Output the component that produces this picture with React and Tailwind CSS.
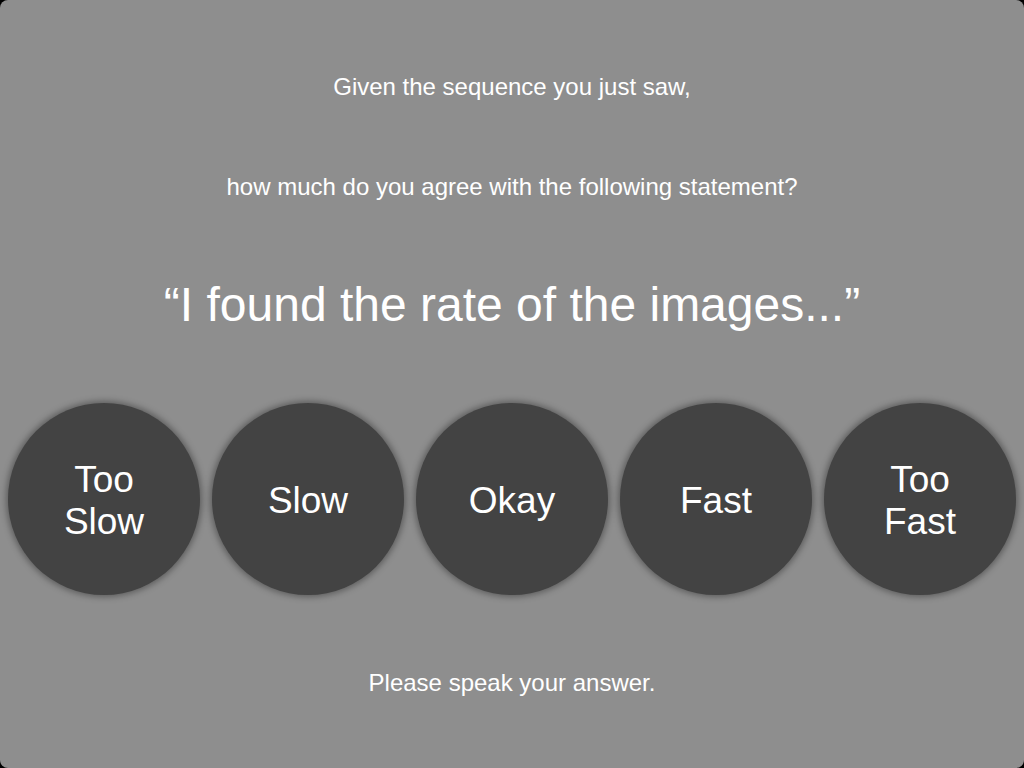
export default function App() {
  const opts = [["Too", "Slow"], ["Slow"], ["Okay"], ["Fast"], ["Too", "Fast"]];
  return (
    <div className="w-[1024px] h-[768px] bg-black" style={{ fontFamily: '"Liberation Sans", Arial, sans-serif' }}>
      <div className="w-full h-full rounded-[8px] bg-[#8e8e8e] text-white flex flex-col items-center">
        <div className="mt-[73px] h-[28px] leading-[28px] text-[24px]">Given the sequence you just saw,</div>
        <div className="mt-[72px] h-[28px] leading-[28px] text-[24px]">how much do you agree with the following statement?</div>
        <div className="mt-[75px] h-[58px] leading-[58px] text-[48px]">“I found the rate of the images...”</div>
        <div className="mt-[69px] flex gap-[12px]">
          {opts.map((o, i) => (
            <div key={i} className="w-[192px] h-[192px] pt-[4px] rounded-full bg-[#434343] shadow-[0_0_6px_2px_rgba(0,0,0,0.35)] flex flex-col items-center justify-center text-[37px] leading-[42px]">
              {o.map((t) => (
                <span key={t}>{t}</span>
              ))}
            </div>
          ))}
        </div>
        <div className="mt-[74px] h-[28px] leading-[28px] text-[24px]">Please speak your answer.</div>
      </div>
    </div>
  );
}
